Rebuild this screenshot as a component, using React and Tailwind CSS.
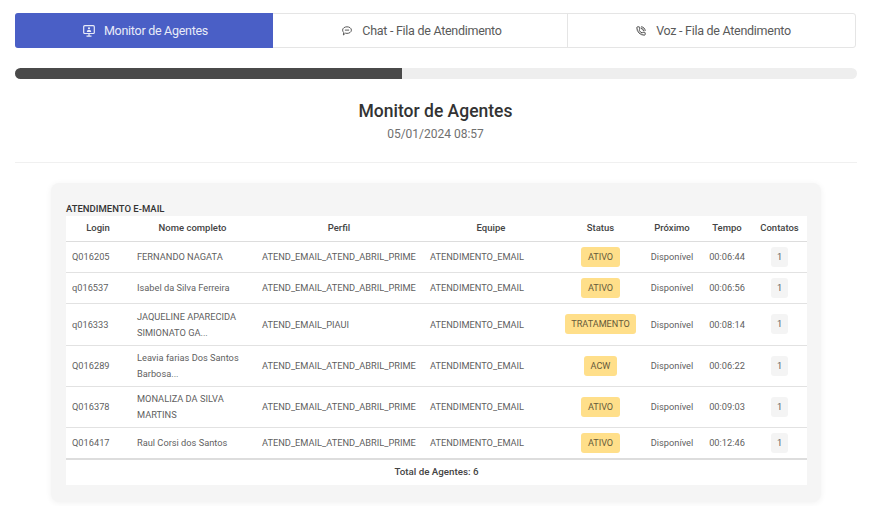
import { PhoneCall } from "lucide-react";

const agentes = [
  { login: "Q016205", nome: ["FERNANDO NAGATA"], perfil: "ATEND_EMAIL_ATEND_ABRIL_PRIME", status: "ATIVO", tempo: "00:06:44", altura: "h-[31px]" },
  { login: "q016537", nome: ["Isabel da Silva Ferreira"], perfil: "ATEND_EMAIL_ATEND_ABRIL_PRIME", status: "ATIVO", tempo: "00:06:56", altura: "h-[31px]" },
  { login: "q016333", nome: ["JAQUELINE APARECIDA", "SIMIONATO GA..."], perfil: "ATEND_EMAIL_PIAUI", status: "TRATAMENTO", tempo: "00:08:14", altura: "h-[42px]" },
  { login: "Q016289", nome: ["Leavia farias Dos Santos", "Barbosa..."], perfil: "ATEND_EMAIL_ATEND_ABRIL_PRIME", status: "ACW", tempo: "00:06:22", altura: "h-[41px]" },
  { login: "Q016378", nome: ["MONALIZA DA SILVA", "MARTINS"], perfil: "ATEND_EMAIL_ATEND_ABRIL_PRIME", status: "ATIVO", tempo: "00:09:03", altura: "h-[41px]" },
  { login: "Q016417", nome: ["Raul Corsi dos Santos"], perfil: "ATEND_EMAIL_ATEND_ABRIL_PRIME", status: "ATIVO", tempo: "00:12:46", altura: "h-[32px]" },
];

function MonitorIcon() {
  return (
    <svg width="12" height="12" viewBox="0 0 12 12" fill="none">
      <rect x="0.7" y="0.7" width="10.6" height="7.8" rx="1" stroke="currentColor" strokeWidth="1.2" />
      <circle cx="6" cy="3.3" r="1.1" fill="currentColor" />
      <path d="M3.9 7V6.3C3.9 5.4 4.8 5 6 5C7.2 5 8.1 5.4 8.1 6.3V7Z" fill="currentColor" />
      <path d="M6 8.8V11M3.5 11.2H8.5" stroke="currentColor" strokeWidth="1.2" />
    </svg>
  );
}

function ChatIcon() {
  return (
    <svg width="10" height="10" viewBox="0 0 10 10" fill="none" stroke="currentColor" strokeWidth="1">
      <path d="M5 0.8C7.4 0.8 9.4 2.2 9.4 4.1C9.4 6 7.4 7.4 5 7.4C4.4 7.4 3.9 7.3 3.4 7.2L1.4 9L1.7 6.4C1 5.8 0.6 5 0.6 4.1C0.6 2.2 2.6 0.8 5 0.8Z" />
      <path d="M2.9 4.1H7.1" />
    </svg>
  );
}

export default function App() {
  return (
    <div className="w-[871px] h-[506px] overflow-hidden bg-white px-[15px] pt-[13px] font-['Roboto',sans-serif]">
      <div className="flex w-[841px] h-[35px] rounded-[3px] border border-[#e5e5e5] text-[12.5px] tracking-[-0.28px] text-[#5a5a5a]">
        <div className="w-[258px] -m-px h-[35px] flex items-center justify-center gap-[9px] rounded-l-[3px] bg-[#4a5fc6] pl-[3px] pt-px text-[#e8ebf8]">
          <MonitorIcon />
          <span>Monitor de Agentes</span>
        </div>
        <div className="w-[295px] ml-px flex items-center justify-center gap-[10px] border-r border-[#e5e5e5] pl-[4px] pt-px">
          <ChatIcon />
          <span>Chat - Fila de Atendimento</span>
        </div>
        <div className="flex-1 flex items-center justify-center gap-[10px] pl-[4px] pt-px">
          <PhoneCall size={10} strokeWidth={2.4} className="text-[#444444]" />
          <span>Voz - Fila de Atendimento</span>
        </div>
      </div>

      <div className="mt-5 w-[842px] h-[11px] rounded-full bg-[#eeeeee] overflow-hidden">
        <div className="w-[387px] h-full bg-[#4a4a4a]" />
      </div>

      <div className="mt-[20px] text-center">
        <h1 className="text-[17.5px] leading-[24px] font-medium text-[#333333]">Monitor de Agentes</h1>
        <p className="pt-[2px] text-[12px] leading-[18px] text-[#707070]">05/01/2024 08:57</p>
      </div>

      <div className="mt-[19px] w-[842px] border-t border-[#f0f0f0]" />

      <div className="mt-5 ml-9 w-[770px] h-[319px] rounded-lg bg-[#f5f5f5] px-[15px] pt-[19px] shadow-[0_1px_6px_rgba(0,0,0,0.06)]">
        <div className="text-[9.5px] leading-[14px] font-medium text-[#333333]">ATENDIMENTO E-MAIL</div>
        <table className="w-[741px] table-fixed border-collapse bg-white text-[9.25px] text-[#5f5f5f]">
          <colgroup>
            <col className="w-[64px]" />
            <col className="w-[125px]" />
            <col className="w-[168px]" />
            <col className="w-[136px]" />
            <col className="w-[83px]" />
            <col className="w-[60px]" />
            <col className="w-[50px]" />
            <col className="w-[55px]" />
          </colgroup>
          <thead>
            <tr className="h-[25px] border-b border-[#dddddd] text-[9.5px] text-[#444444]">
              <th className="font-medium">Login</th>
              <th className="font-medium">Nome completo</th>
              <th className="font-medium">Perfil</th>
              <th className="font-medium">Equipe</th>
              <th className="font-medium">Status</th>
              <th className="font-medium">Próximo</th>
              <th className="font-medium">Tempo</th>
              <th className="font-medium">Contatos</th>
            </tr>
          </thead>
          <tbody>
            {agentes.map((a) => (
              <tr key={a.login} className={`${a.altura} border-b border-[#e2e2e2] last:border-b-2 last:border-[#dddddd]`}>
                <td className="pl-[6px] pt-px">{a.login}</td>
                <td className="pl-[7px] pt-px leading-[16px]">
                  {a.nome.map((linha) => (
                    <div key={linha}>{linha}</div>
                  ))}
                </td>
                <td className="pl-[7px] pt-px">{a.perfil}</td>
                <td className="pl-[7px] pt-px">ATENDIMENTO_EMAIL</td>
                <td className="text-center">
                  <span className="inline-block h-5 rounded-[3px] bg-[#ffdf8a] px-[6.5px] text-[9.1px] leading-5 text-[#665a3a]">
                    {a.status}
                  </span>
                </td>
                <td className="pt-px text-center">Disponível</td>
                <td className="pt-px text-center">{a.tempo}</td>
                <td className="text-center">
                  <span className="inline-block h-5 w-[17px] rounded-[3px] bg-[#f4f4f4] leading-5">1</span>
                </td>
              </tr>
            ))}
          </tbody>
          <tfoot>
            <tr className="h-[26px]">
              <td colSpan={8} className="text-center text-[9.75px] font-medium text-[#444444]">Total de Agentes: 6</td>
            </tr>
          </tfoot>
        </table>
      </div>
    </div>
  );
}
